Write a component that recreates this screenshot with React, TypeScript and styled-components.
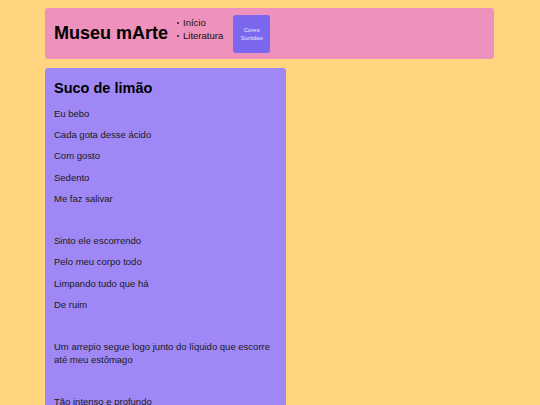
import styled, { createGlobalStyle } from "styled-components";

const GlobalStyle = createGlobalStyle`
  body {
    margin: 0;
    background: #ffd580;
    font-family: "Comic Sans MS", "Liberation Sans", sans-serif;
    color: #1a1a1a;
  }
`;

const Page = styled.div`
  padding: 8px 46px 0 45px;
  display: flex;
  flex-direction: column;
  gap: 9px;
`;

const Header = styled.header`
  display: flex;
  align-items: center;
  height: 51px;
  padding: 0 9px;
  background: #ee91bc;
  border-radius: 3px;
`;

const Title = styled.h1`
  margin: 0 8px 0 0;
  font-size: 18px;
  font-weight: bold;
  color: #000;
`;

const NavList = styled.ul`
  margin: 0 10px 10px 0;
  padding: 0 0 0 7px;
  font-size: 9.5px;
  line-height: 13px;
  color: #111;

  li {
    list-style: none;
    position: relative;
  }

  li::before {
    content: "";
    position: absolute;
    left: -6px;
    top: 6px;
    width: 2px;
    height: 2px;
    background: #222;
    border-radius: 50%;
  }
`;

const ThemeButton = styled.button`
  width: 37px;
  height: 38px;
  padding: 0;
  border: none;
  border-radius: 3px;
  background: #7b68ee;
  color: #e8e4ff;
  font-family: inherit;
  font-size: 6px;
  line-height: 8px;
`;

const Card = styled.article`
  width: 241px;
  box-sizing: border-box;
  padding: 1px 9px 10px;
  background: #9f88f5;
  border-radius: 3px 3px 0 0;
`;

const CardTitle = styled.h2`
  margin: 11px 0 11px;
  font-size: 14.5px;
  font-weight: bold;
  color: #000;
`;

const Verse = styled.p`
  margin: 0 0 8.2px;
  font-size: 9.5px;
  line-height: 13px;
  min-height: 13px;
`;

const poem = [
  "Eu bebo",
  "Cada gota desse ácido",
  "Com gosto",
  "Sedento",
  "Me faz salivar",
  "",
  "Sinto ele escorrendo",
  "Pelo meu corpo todo",
  "Limpando tudo que há",
  "De ruim",
  "",
  "Um arrepio segue logo junto do líquido que escorre até meu estômago",
  "",
  "Tão intenso e profundo",
  "Que me faz querer mais",
];

export default function App() {
  return (
    <>
      <GlobalStyle />
      <Page>
        <Header>
          <Title>Museu mArte</Title>
          <NavList>
            <li>Início</li>
            <li>Literatura</li>
          </NavList>
          <ThemeButton>
            Cores
            <br />
            Sortidas
          </ThemeButton>
        </Header>
        <Card>
          <CardTitle>Suco de limão</CardTitle>
          {poem.map((line, i) => (
            <Verse key={i}>{line}</Verse>
          ))}
        </Card>
      </Page>
    </>
  );
}
